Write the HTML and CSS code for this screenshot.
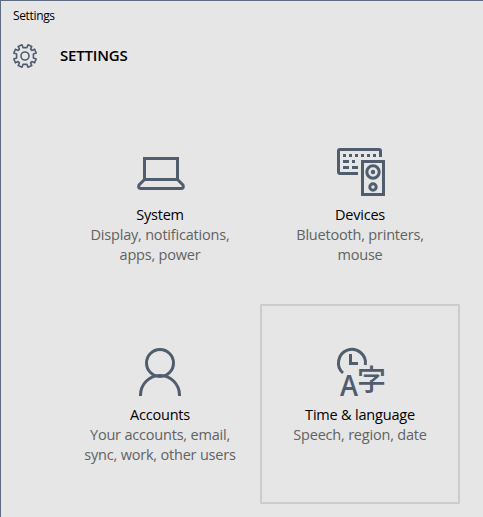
FILE: index.html
```
<!DOCTYPE html>
<html lang="en">
<head>
  <meta charset="UTF-8" />
  <meta name="viewport" content="width=device-width, initial-scale=1.0" />
  <title>Settings</title>
  <link rel="stylesheet" href="styles.css">
</head>
<body>
  <div class="window">
    <div class="titlebar">Settings</div>
    <header class="header">
      <svg class="gear" viewBox="0 0 26 26">
        <path d="M11 4.6 L10 1.8 L6.2 3.4 L7.4 6.1 L6.1 7.4 L3.4 6.2 L1.8 10 L4.6 11 L4.6 15 L1.8 16 L3.4 19.8 L6.1 18.6 L7.4 19.9 L6.2 22.6 L10 24.2 L11 21.4 L15 21.4 L16 24.2 L19.8 22.6 L18.6 19.9 L19.9 18.6 L22.6 19.8 L24.2 16 L21.4 15 L21.4 11 L24.2 10 L22.6 6.2 L19.9 7.4 L18.6 6.1 L19.8 3.4 L16 1.8 L15 4.6 Z" />
        <circle cx="13" cy="13" r="4" />
      </svg>
      <h1>SETTINGS</h1>
    </header>
    <main class="grid">
      <a class="tile">
        <svg class="icon" viewBox="0 0 48 48">
          <rect x="7.5" y="10.5" width="33" height="21" />
          <path d="M7.5 31.5 L2 37 Q1 40.5 3.5 40.5 H44.5 Q47 40.5 46 37 L40.5 31.5" />
        </svg>
        <span class="name">System</span>
        <span class="desc">Display, notifications,<br>apps, power</span>
      </a>
      <a class="tile">
        <svg class="icon" viewBox="0 0 48 48">
          <path d="M21 25.5 H3 Q1.5 25.5 1.5 24 V3 Q1.5 1.5 3 1.5 H42 Q43.5 1.5 43.5 3 V9" />
          <path class="keys" d="M6 6h3v3h-3z M12 6h3v3h-3z M18 6h3v3h-3z M24 6h3v3h-3z M30 6h3v3h-3z M36 6h3v3h-3z M6 12h6v3h-6z M15 12h3v3h-3z M6 18h6v3h-6z M15 18h6v3h-6z" />
          <rect x="25.5" y="13.5" width="21" height="33" />
          <circle cx="36" cy="24" r="6.2" />
          <circle class="keys" cx="36" cy="24" r="2.2" />
          <circle cx="36" cy="39" r="3.2" />
        </svg>
        <span class="name">Devices</span>
        <span class="desc">Bluetooth, printers,<br>mouse</span>
      </a>
      <a class="tile">
        <svg class="icon" viewBox="0 0 48 48">
          <circle cx="23" cy="15" r="13.5" />
          <path d="M3.5 48 V47 A19.5 19.5 0 0 1 42.5 47 V48" />
        </svg>
        <span class="name">Accounts</span>
        <span class="desc">Your accounts, email,<br>sync, work, other users</span>
      </a>
      <a class="tile selected">
        <svg class="icon" viewBox="0 0 48 48">
          <path d="M6 25 A13.5 13.5 0 1 1 28.3 17" />
          <path d="M13.5 6 V15.5 H21" />
          <text class="latin" x="3" y="47.5" textLength="18" lengthAdjust="spacingAndGlyphs">A</text>
          <text class="kanji" x="20" y="42.5">字</text>
        </svg>
        <span class="name">Time &amp; language</span>
        <span class="desc">Speech, region, date</span>
      </a>
    </main>
  </div>
</body>
</html>
```
FILE: styles.css
```
* { box-sizing: border-box; }
body {
  margin: 0;
  background: #e6e6e6;
  color: #000;
  font-family: "Open Sans", "Noto Sans", sans-serif;
  overflow: hidden;
}
.window {
  height: 517px;
  border-top: 1px solid #5f6b80;
  border-left: 1px solid #5f6b80;
}
.titlebar { height: 30px; padding-left: 12px; font-size: 12px; line-height: 30px; letter-spacing: -0.35px; }
.header { display: flex; align-items: center; height: 50px; padding-left: 11px; }
.header h1 { margin: -2px 0 0 22px; font-size: 15px; font-weight: 600; line-height: 20px; letter-spacing: -0.2px; }

.gear { width: 26px; height: 26px; fill: none; stroke: #4f5d6d; stroke-width: 1.6; stroke-linejoin: round; }

.grid { display: grid; grid-template-columns: 200px 200px; grid-auto-rows: 200px; padding: 23px 0 0 59px; }
.tile {
  display: flex;
  flex-direction: column;
  align-items: center;
  padding-top: 42px;
  border: 2px solid transparent;
  font-size: 14.5px;
  line-height: 20px;
  letter-spacing: -0.2px;
  text-align: center;
  white-space: nowrap;
}
.tile.selected { border-color: #cccccc; }
.name { margin-top: 9px; }
.desc { color: #626262; }

.icon { width: 48px; height: 48px; margin-left: 2px; overflow: visible; fill: none; stroke: #4f5d6d; stroke-width: 3; }
.icon .keys { fill: #4f5d6d; stroke: none; }
.icon text { fill: #4f5d6d; stroke: none; letter-spacing: 0; }
.latin { font: 600 29px "Open Sans", sans-serif; }
.kanji { font: 500 29px "Noto Sans CJK JP", sans-serif; }
```
